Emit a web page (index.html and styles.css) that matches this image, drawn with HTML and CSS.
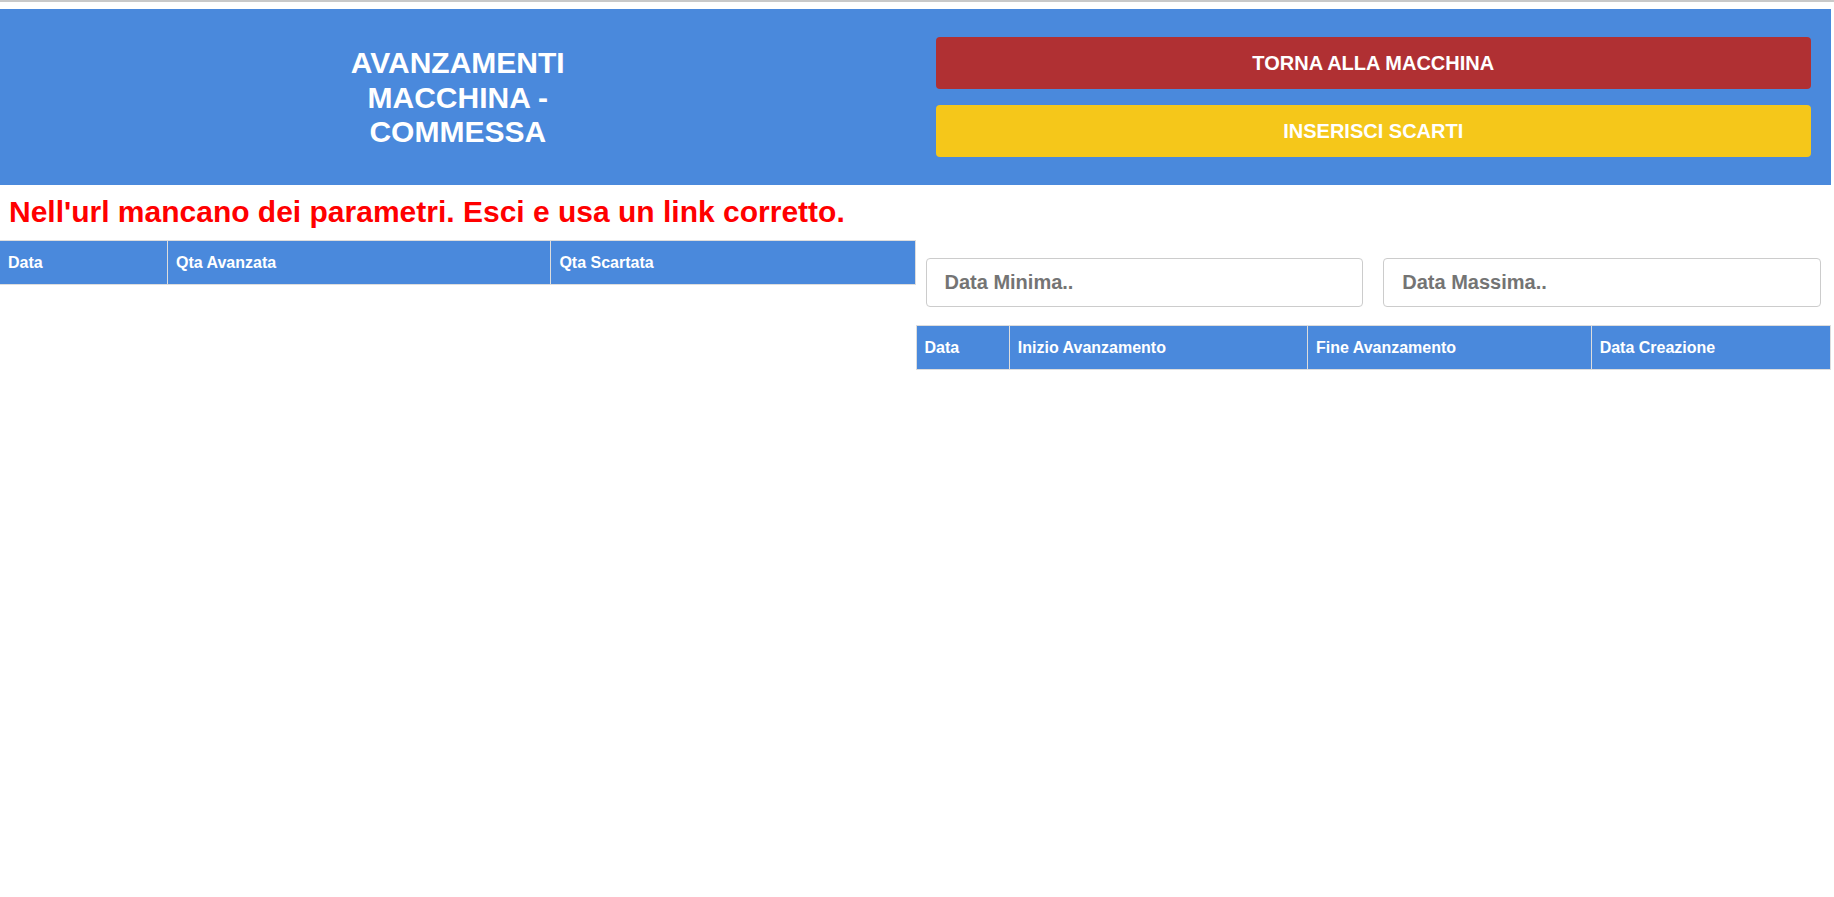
FILE: index.html
```html
<!DOCTYPE html>
<html lang="it">
<head>
<meta charset="utf-8">
<title>Avanzamenti Macchina - Commessa</title>
<link rel="stylesheet" href="styles.css">
</head>
<body>
<div class="topline"></div>
<div class="page">
  <header class="header">
    <div class="header-left">
      <h1 class="title">AVANZAMENTI MACCHINA - COMMESSA</h1>
    </div>
    <div class="header-right">
      <button class="btn btn-red">TORNA ALLA MACCHINA</button>
      <button class="btn btn-yellow">INSERISCI SCARTI</button>
    </div>
  </header>
  <h2 class="error">Nell'url mancano dei parametri. Esci e usa un link corretto.</h2>
  <main class="main">
    <section class="col">
      <table class="table table-left">
        <thead>
          <tr><th>Data</th><th>Qta Avanzata</th><th>Qta Scartata</th></tr>
        </thead>
      </table>
    </section>
    <section class="col">
      <div class="filters">
        <div class="field"><input class="input" type="text" placeholder="Data Minima.."></div>
        <div class="field"><input class="input" type="text" placeholder="Data Massima.."></div>
      </div>
      <table class="table">
        <thead>
          <tr><th>Data</th><th>Inizio Avanzamento</th><th>Fine Avanzamento</th><th>Data Creazione</th></tr>
        </thead>
      </table>
    </section>
  </main>
</div>
</body>
</html>
```

FILE: styles.css
```css
html, body {
  margin: 0;
  padding: 0;
  background: #ffffff;
  font-family: "Liberation Sans", Arial, sans-serif;
}

*, *::before, *::after {
  box-sizing: border-box;
}

.topline {
  height: 2px;
  background: #c9c9c9;
  margin-bottom: 7px;
}

.page {
  width: 1831px;
}

.header {
  display: grid;
  grid-template-columns: 1fr 1fr;
  background: #4a89dc;
  padding: 28px 0;
}

.header-left {
  min-width: 0;
  display: flex;
  align-items: center;
  justify-content: center;
  padding-top: 2px;
}

.title {
  margin: 0;
  max-width: 240px;
  text-align: center;
  color: #ffffff;
  font-size: 30px;
  font-weight: bold;
  line-height: 34.5px;
}

.header-right {
  min-width: 0;
  display: flex;
  flex-direction: column;
  gap: 16px;
  padding: 0 20px;
}

.btn {
  height: 52px;
  border: none;
  border-radius: 4px;
  color: #ffffff;
  font-family: "Liberation Sans", Arial, sans-serif;
  font-size: 20px;
  font-weight: bold;
  width: 100%;
}

.btn-red {
  background: #b03033;
}

.btn-yellow {
  background: #f5c71a;
}

.error {
  margin: 10px 0 10px;
  padding-left: 9px;
  color: #ff0000;
  font-size: 30px;
  font-weight: bold;
  line-height: 34.5px;
}

.main {
  display: grid;
  grid-template-columns: 1fr 1fr;
  align-items: start;
}

.col {
  min-width: 0;
}

.table {
  width: 100%;
  border-collapse: collapse;
}

.table th {
  background: #4a89dc;
  color: #ffffff;
  font-size: 16px;
  font-weight: bold;
  text-align: left;
  padding: 12px 8px;
  border: 1px solid #dddddd;
  line-height: 19px;
}

.table-left th:first-child {
  border-left: 0;
}

.filters {
  display: flex;
  padding: 8px 0 8px;
}

.field {
  flex: 1;
  min-width: 0;
  padding: 10px;
}

.input {
  width: 100%;
  height: 49px;
  padding: 12px 18px;
  border: 1px solid #cccccc;
  border-radius: 4px;
  font-family: "Liberation Sans", Arial, sans-serif;
  font-size: 20px;
  font-weight: bold;
  line-height: 23px;
  color: #333333;
  outline: none;
}

.input::placeholder {
  color: #747474;
}
```
